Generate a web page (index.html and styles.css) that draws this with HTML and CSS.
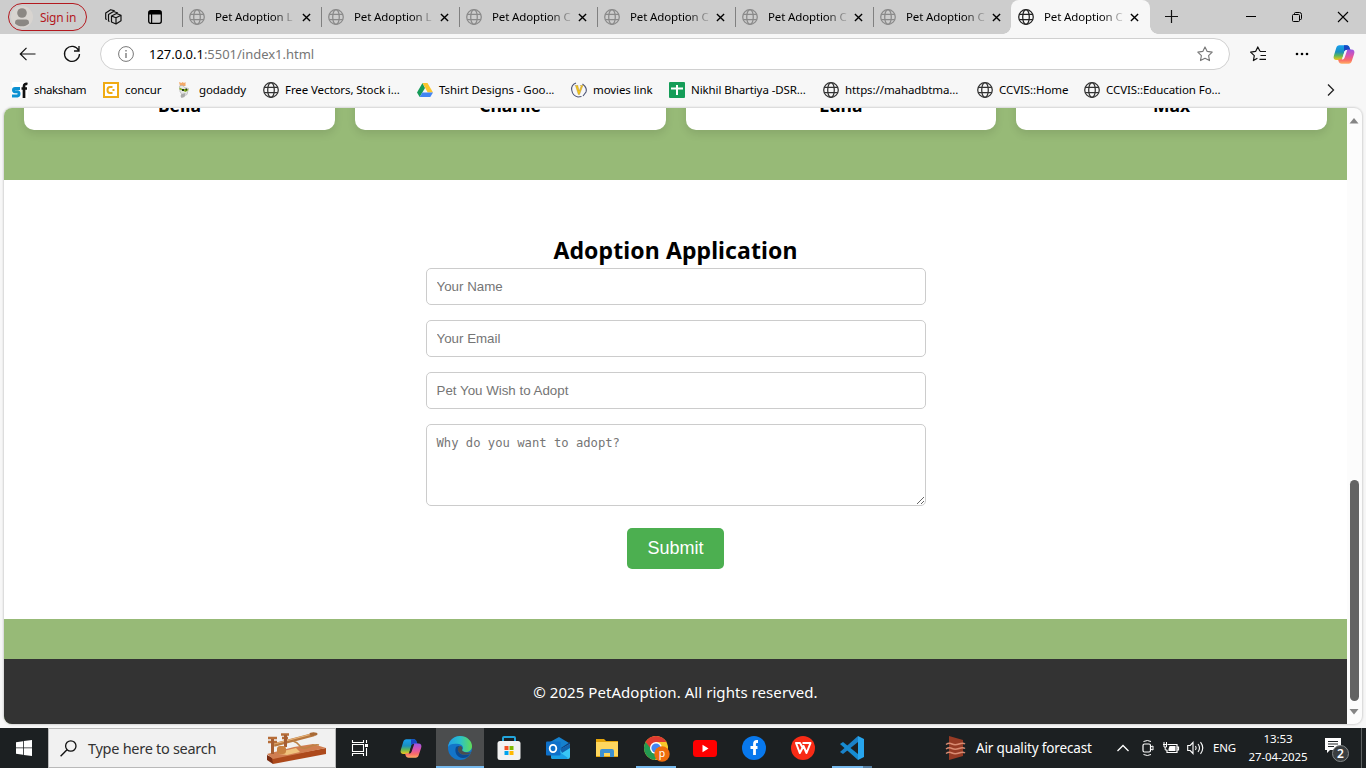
FILE: index.html
```html
<!DOCTYPE html>
<html lang="en">
<head>
<meta charset="utf-8">
<title>Pet Adoption</title>
<link rel="stylesheet" href="styles.css">
</head>
<body>
<svg class="defs" width="0" height="0" aria-hidden="true">
  <defs>
    <symbol id="globe" viewBox="0 0 16 16"><g fill="none" stroke="currentColor" stroke-width="1.25"><circle cx="8" cy="8" r="7.3"/><ellipse cx="8" cy="8" rx="3.3" ry="7.3"/><path d="M1.200 5.400h13.600M1.200 10.600h13.600"/></g></symbol>
    <symbol id="close" viewBox="0 0 10 10"><path d="M1 1l8 8M9 1l-8 8" fill="none" stroke="currentColor" stroke-width="1.500"/></symbol>
    <symbol id="copilot" viewBox="0 0 24 22">
      <path d="M7 1h8c1.800 0 2.500 1 3 2.500L19 6h-3.500c-2 0-3 1-3.500 3l-2 6.500C9.500 17 9 17 7 17H4c-3 0-4-2-3-5l2.500-8C4.200 2 5 1 7 1z" fill="url(#cpA)"/>
      <path d="M12 1h3c1.800 0 2.500 1 3 2.500L19 6h-3.500c-2 0-3 .5-3.500 1.500z" fill="#1748c4"/>
      <path d="M17 21H9.500c-2 0-3-1-3.500-3l-.5-1.500H8c2 0 3-1 3.500-3l2-6C14 6 15 5.500 17 5.500h3c3 0 4 2 3 5l-2.500 7.500c-.7 2-1.500 3-3.500 3z" fill="url(#cpB)"/>
      <path d="M10.500 14.500l2.200-7C13.300 6.300 14 6 15.500 6l-2.700 8c-.6 1.800-1.200 2.500-3.300 2.500.6-.5.700-1 1-2z" fill="var(--behind, #f7f7f7)"/>
    </symbol>
    <linearGradient id="cpA" x1="0" y1="0" x2="0" y2="1"><stop offset="0" stop-color="#18a0f0"/><stop offset=".45" stop-color="#1a8fbd"/><stop offset=".7" stop-color="#5db65a"/><stop offset="1" stop-color="#f4c818"/></linearGradient>
    <linearGradient id="cpB" x1="0" y1="0" x2="0" y2="1"><stop offset="0" stop-color="#9b55e5"/><stop offset=".45" stop-color="#df55a8"/><stop offset=".75" stop-color="#fa6d68"/><stop offset="1" stop-color="#ffac63"/></linearGradient>
  </defs>
</svg>

<header class="tabstrip">
  <div class="signin"><svg width="22" height="22" viewBox="0 0 22 22"><circle cx="11" cy="11" r="11" fill="#d8d4d0"/><circle cx="11" cy="7" r="4.800" fill="#8b8783"/><path d="M4 17.500c0-3.300 1-4 3.500-4h7c2.500 0 3.500.7 3.500 4-2 2-4.500 2.800-7 2.800s-5-.8-7-2.800z" fill="#8b8783"/></svg><span>Sign in</span></div>
  <svg class="workspaces" width="17" height="16" viewBox="0 0 17 16"><g fill="none" stroke="#111" stroke-width="1.200" stroke-linejoin="round"><path d="M6.500 7l5-2.500 4.500 1.800v5.500L11 15l-4.500-2zM6.500 7l4.500 1.800 5-2.500M11 8.800V15"/><path d="M4.500 12.500l-1-.5V5.500l5-3 4.500 1.500M1.800 10.500L.7 10V4l5-3.300 4 1.200"/></g></svg>
  <svg class="tab-menu" width="14" height="14" viewBox="0 0 14 14"><rect x=".7" y=".7" width="12.600" height="12.600" rx="2" fill="none" stroke="#000" stroke-width="1.300"/><path d="M1 1h12v3.500H1zM3 4h1.200v9H3z"/></svg>
  <nav class="tabs">
    <div class="tab first"><svg class="ico"><use href="#globe"/></svg><span class="tab-title">Pet Adoption L</span><svg class="x"><use href="#close"/></svg></div>
    <div class="tab"><svg class="ico"><use href="#globe"/></svg><span class="tab-title">Pet Adoption L</span><svg class="x"><use href="#close"/></svg></div>
    <div class="tab"><svg class="ico"><use href="#globe"/></svg><span class="tab-title">Pet Adoption C</span><svg class="x"><use href="#close"/></svg></div>
    <div class="tab"><svg class="ico"><use href="#globe"/></svg><span class="tab-title">Pet Adoption C</span><svg class="x"><use href="#close"/></svg></div>
    <div class="tab"><svg class="ico"><use href="#globe"/></svg><span class="tab-title">Pet Adoption C</span><svg class="x"><use href="#close"/></svg></div>
    <div class="tab"><svg class="ico"><use href="#globe"/></svg><span class="tab-title">Pet Adoption C</span><svg class="x"><use href="#close"/></svg></div>
    <div class="tab active"><svg class="ico"><use href="#globe"/></svg><span class="tab-title">Pet Adoption C</span><svg class="x"><use href="#close"/></svg></div>
  </nav>
  <svg class="newtab" width="14" height="14" viewBox="0 0 14 14"><path d="M6.500 0v13M0 6.500h13" stroke="#111" stroke-width="1.200"/></svg>
  <div class="winbtns">
    <svg width="10" height="10"><path d="M0 4.500h10" stroke="#000"/></svg>
    <svg width="10" height="10" viewBox="0 0 10 10"><path d="M2.500 2V1.500q0-1 1-1H7.500q2 0 2 2V6.500q0 1-1 1H8" fill="none" stroke="#000"/><rect x=".5" y="2.500" width="7" height="7" rx="1" fill="none" stroke="#000"/></svg>
    <svg width="10" height="10"><path d="M0 0l10 10M10 0L0 10" stroke="#000" stroke-width="1.100"/></svg>
  </div>
</header>

<div class="toolbar">
  <svg class="back" width="17" height="14" viewBox="0 0 17 14"><path d="M16.500 7H1.500M7.500 .8L1.300 7l6.200 6.200" fill="none" stroke="#111" stroke-width="1.200"/></svg>
  <svg class="reload" width="18" height="18" viewBox="0 0 18 18"><path d="M15.700 5.500A7.500 7.500 0 1 0 16.500 9M16 1v5h-5" fill="none" stroke="#111" stroke-width="1.300"/></svg>
  <div class="address">
    <svg width="16" height="16" viewBox="0 0 16 16"><circle cx="8" cy="8" r="7.400" fill="none" stroke="#777"/><path d="M8 7v5M8 4v1.500" stroke="#666" stroke-width="1.200"/></svg>
    <span class="url">127.0.0.1<span>:5501/index1.html</span></span>
    <svg class="star" width="16" height="16" viewBox="0 0 16 16"><path d="M8 .9l2.200 4.500 5 .7-3.600 3.500.9 5L8 12.300l-4.500 2.300.9-5L.8 6.100l5-.7z" fill="none" stroke="#777" stroke-width="1.100" stroke-linejoin="round"/></svg>
  </div>
  <svg class="favs" width="17" height="16" viewBox="0 0 17 16"><path d="M10 5.200L7.800.9 5.600 5.400l-5 .7 3.700 3.500-.9 5 4-2.300M10 5.500h6M10.500 9.500H16M9.500 13.300H16" fill="none" stroke="#111" stroke-width="1.200" stroke-linejoin="round"/></svg>
  <svg class="more" width="14" height="4"><circle cx="2" cy="2" r="1.300"/><circle cx="7" cy="2" r="1.300"/><circle cx="12" cy="2" r="1.300"/></svg>
  <svg class="cp" width="22" height="21"><use href="#copilot"/></svg>
</div>

<nav class="bookmarks">
  <a><svg class="ico" viewBox="0 0 16 16"><rect width="16" height="16" fill="#fff"/><path d="M8 6.500H3q-1.500 0-1.500 1.600T3 9.800h2.500q1.500 0 1.500 2T5.500 14H0" fill="none" stroke="#0c91d2" stroke-width="3"/><path d="M15.500 2q-3.500-.7-3.500 2.500V16M9.500 6.500H15" fill="none" stroke="#111" stroke-width="2.700"/></svg><span>shaksham</span></a>
  <a><svg class="ico" viewBox="0 0 16 16"><rect x="1" y="1" width="14" height="14" fill="#fff" stroke="#f0ab13" stroke-width="2"/><path d="M9.500 5H7Q4.500 5 4.500 8T7 11h2.500" fill="none" stroke="#f0ab13" stroke-width="2"/><path d="M9.500 7h2v2h-2z" fill="#f0ab13"/></svg><span>concur</span></a>
  <a><svg class="ico" viewBox="0 0 16 16"><path d="M2 0l2.500 1 1-1 1.500 1 1.500-1v4H3z" fill="#f4a968"/><path d="M2.500 4q4-1.500 5 1.500l4 1-1.500 6-4 2-3-5z" fill="#e6e6e6" stroke="#aaa" stroke-width=".6"/><path d="M2.500 5.500l3 1.500 5 0 1 1-3 2-3-1.500-3-1z" fill="#88b51e"/><path d="M5 7h2v2H5zM8.500 6.500h1.500v2H8.500z" fill="#263b18"/><path d="M4.500 12l4-1-1 4-3 1-1-2z" fill="#aaa"/></svg><span>godaddy</span></a>
  <a><svg class="ico"><use href="#globe"/></svg><span>Free Vectors, Stock i...</span></a>
  <a><svg class="ico" viewBox="0 0 16 16"><path d="M5.500 1L0 10.500 2.700 15 8 6z" fill="#159b58"/><path d="M5.500 1h5L16 10.500h-5.300z" fill="#fbc62c"/><path d="M5.300 10.500H16L13.300 15H2.700z" fill="#4285f4"/></svg><span>Tshirt Designs - Goo...</span></a>
  <a><svg class="ico" viewBox="0 0 16 16"><path d="M5 1Q0 3 .7 8q1 6 6.300 7l3.500-.5M11.500 2q5 4 3.500 8l-3 4" fill="none" stroke="#4b5375" stroke-width="1.100"/><path d="M4 3.500h3v1l1.200 4.500L10 4.500l-.8-1h3.300l-1 1-3 8H7.300l-2.500-8z" fill="#f3c51b" stroke="#a98732" stroke-width=".4"/></svg><span>movies link</span></a>
  <a><svg class="ico" viewBox="0 0 16 16"><rect width="16" height="16" rx="1" fill="#159d58"/><path d="M2 6.500h12M8 3v10" stroke="#fff" stroke-width="2"/></svg><span>Nikhil Bhartiya -DSR...</span></a>
  <a><svg class="ico"><use href="#globe"/></svg><span>https://mahadbtma...</span></a>
  <a><svg class="ico"><use href="#globe"/></svg><span>CCVIS::Home</span></a>
  <a><svg class="ico"><use href="#globe"/></svg><span>CCVIS::Education Fo...</span></a>
  <svg class="chev" width="8" height="12"><path d="M1 .5L6.500 6 1 11.500" fill="none" stroke="#222" stroke-width="1.300"/></svg>
</nav>

<div class="viewport">
  <main class="page">
    <section class="pets">
      <div class="card"><h3>Bella</h3></div>
      <div class="card"><h3>Charlie</h3></div>
      <div class="card"><h3>Luna</h3></div>
      <div class="card"><h3>Max</h3></div>
    </section>
    <section class="apply">
      <h2>Adoption Application</h2>
      <form>
        <input type="text" placeholder="Your Name">
        <input type="email" placeholder="Your Email">
        <input type="text" placeholder="Pet You Wish to Adopt">
        <textarea placeholder="Why do you want to adopt?"></textarea>
        <button type="button">Submit</button>
      </form>
    </section>
    <footer><span>© 2025 PetAdoption. All rights reserved.</span></footer>
  </main>
  <div class="scrollbar">
    <svg width="10" height="6"><path d="M5 0l4.500 5.500h-9z" fill="#858585"/></svg>
    <div class="thumb"></div>
    <svg width="10" height="6"><path d="M.5 0h9L5 5.500z" fill="#858585"/></svg>
  </div>
</div>

<div class="taskbar">
  <div class="start"><svg width="16" height="16" viewBox="0 0 16 16"><path d="M0 2.200l7-1v6.300H0zM7.800 1L16 0v7.500H7.800zM0 8.300h7v6.400l-7-1zM7.800 8.300H16V16l-8.200-1.100z" fill="#fff"/></svg></div>
  <div class="search">
    <svg width="17" height="17" viewBox="0 0 17 17"><circle cx="10.800" cy="6" r="5.200" fill="none" stroke="#111" stroke-width="1.300"/><path d="M7 9.800L.6 16.200" stroke="#111" stroke-width="1.400"/></svg>
    <span>Type here to search</span>
    <svg class="morse" width="61" height="32" viewBox="0 0 61 32"><path d="M1 23l6 3v6l-6-4z" fill="#7c2d12"/><path d="M6 26l54-10v6L7 32z" fill="#ad4a1c"/><path d="M1 22l27-7 19-3 13 4L7 27z" fill="#d07d50"/><path d="M13 20l17-4 4 4-13 3-8-1z" fill="#efc27d"/><path d="M8 13L48 2.500" stroke="#b8783f" stroke-width="3.400"/><path d="M8 12L48 1.500" stroke="#e8b67c" stroke-width="1.200"/><ellipse cx="47.500" cy="2" rx="4" ry="1.800" fill="#a86a36"/><path d="M2 6h9M2 10h9M15 2.500h8M16 6h6" stroke="#b66d38" stroke-width="2.400"/><path d="M6.500 7v15M19.500 3v12" stroke="#a65e32" stroke-width="3"/><rect x="11" y="14" width="9" height="8" rx="3" fill="#c88140"/><path d="M27 9q4 1 7 5t9 1 10-2" fill="none" stroke="#bd8347" stroke-width="1.400"/></svg>
  </div>
  <div class="apps">
    <div class="app wide"><svg width="17" height="16" viewBox="0 0 17 16"><path d="M.5 0v2.500h11V0M.5 16v-2.500h11V16M.5 4.500h11v7H.500zM14.500 0v3M14.500 8v8" fill="none" stroke="#fff" stroke-width="1.100"/><path d="M13 4h3v3h-3z" fill="#fff"/></svg></div>
    <div class="app dark"><svg width="22" height="21"><use href="#copilot"/></svg></div>
    <div class="app edge"><svg width="24" height="24" viewBox="0 0 24 24"><defs><linearGradient id="eg" x1="0" x2="1"><stop offset="0" stop-color="#239ee7"/><stop offset=".5" stop-color="#2ac1ca"/><stop offset="1" stop-color="#62dc55"/></linearGradient></defs><circle cx="12" cy="12" r="12" fill="#1375c8"/><path d="M0 11C1 4 6 0 12 0c7 0 12 5 12 10 0 4-3 6-6 6s-5-1-4-2c2-2 1-5-3-6C6 7 1 8 0 11z" fill="url(#eg)"/><path d="M8 11c-2 5 1 11 7 11 3 0 5-1 7-4-5 2-11 1-12-4 0-2 1-4 2-4-2 0-3 0-4 1z" fill="#0c4a91"/><path d="M12 10c-3 1-3 6 1 8 3 1.500 7 1 10-1l1-1c-2 1-9 1-10-2 1-2 0-4-2-4z" fill="#4b4d4e"/></svg><i></i></div>
    <div class="app"><svg width="24" height="24" viewBox="0 0 24 24"><path d="M6 6V2q0-1 1-1h10q1 0 1 1v4" fill="none" stroke="#22a5dc" stroke-width="2"/><rect x=".5" y="5" width="23" height="19" rx="2.500" fill="#f2f2f2"/><path d="M7.500 10h4v4h-4z" fill="#f25022"/><path d="M12.500 10h4v4h-4z" fill="#7fba00"/><path d="M7.500 15h4v4h-4z" fill="#00a4ef"/><path d="M12.500 15h4v4h-4z" fill="#ffb900"/></svg></div>
    <div class="app"><svg width="24" height="22" viewBox="0 0 24 22"><path d="M4 5l9-5 10 6v10H4z" fill="#1581cf"/><path d="M15 11l9-6v4l-8 5z" fill="#123c78"/><path d="M5 12h10l9-5v13q0 2-2 2H7q-2 0-2-2z" fill="#39c6f4"/><path d="M14 12l10-5v4l-8 5z" fill="#1262ad"/><path d="M5 16h10l7 5-1 1H7q-2 0-2-2z" fill="#1aa0e4"/><rect x="0" y="4.500" width="14.500" height="14" rx="1" fill="#0e70c9"/><ellipse cx="7" cy="11.500" rx="3.300" ry="3.700" fill="none" stroke="#fff" stroke-width="1.800"/></svg></div>
    <div class="app"><svg width="22" height="18" viewBox="0 0 22 18"><path d="M0 0h8l2 2h12v16H0z" fill="#e5a50a"/><path d="M0 3h22v14H0z" fill="#ffd75e"/><path d="M4 18v-6q0-2 2-2h10q2 0 2 2v6h-4v-4H8v4z" fill="#3d91d2"/></svg></div>
    <div class="app run chrome"><svg width="27" height="27" viewBox="0 0 27 27"><circle cx="13" cy="13" r="12" fill="#f9c829"/><path d="M2.600 7A12 12 0 0 1 23.400 7H13l-5 9z" fill="#df3b31"/><path d="M2.600 7A12 12 0 0 0 12 25l5-9-8-1z" fill="#239951"/><circle cx="13" cy="13" r="6" fill="#fff"/><circle cx="13" cy="13" r="4.600" fill="#4285f4"/><circle cx="19" cy="19" r="7.700" fill="#ed6c0c"/><text x="19" y="21.500" text-anchor="middle" fill="#fff" class="badge-letter">p</text></svg><i></i></div>
    <div class="app"><svg width="24" height="17" viewBox="0 0 24 17"><rect width="24" height="17" rx="3.500" fill="#f00"/><path d="M9.500 4.800l6 3.700-6 3.700z" fill="#fff"/></svg></div>
    <div class="app"><svg width="24" height="24" viewBox="0 0 24 24"><circle cx="12" cy="12" r="12" fill="#0878ed"/><path d="M16 5.500h-1.200q-2.300 0-2.300 2.500v11M8.500 11.500h7" fill="none" stroke="#fff" stroke-width="2.800"/></svg></div>
    <div class="app"><svg width="24" height="24" viewBox="0 0 24 24"><circle cx="12" cy="12" r="12" fill="#f82b16"/><path d="M11.500 7H19.500L15.500 17 12.500 10 8.800 17 5 7h4l2.200 4" fill="none" stroke="#fff" stroke-width="2" stroke-linejoin="round"/></svg></div>
    <div class="app run code"><svg width="24" height="24" viewBox="0 0 24 24"><path d="M18 0l6 3v18l-6 3z" fill="#27a5ed"/><path d="M18 6L3 18l-3-2L18 0z" fill="#1b82c9"/><path d="M18 18L3 6 0 8l18 16z" fill="#168bd1"/></svg><i></i></div>
  </div>
  <div class="tray">
    <svg class="air" width="20" height="24" viewBox="0 0 20 24"><path d="M3 0l14 4v16L3 24z" fill="#963b25"/><path d="M0 8.500q3-2 6-.5t7 0 6 0M0 13q3-2 6-.5t7 0 6 0M0 17.500q3-2 6-.5t7 0 6 0" fill="none" stroke="#d98b72" stroke-width="1.500"/></svg>
    <span class="air-text">Air quality forecast</span>
    <svg class="up" width="12" height="8"><path d="M.5 7L6 1.500 11.500 7" fill="none" stroke="#fff" stroke-width="1.300"/></svg>
    <svg class="cam" width="12" height="16" viewBox="0 0 12 16"><rect x="1" y="4" width="7.500" height="8" rx="1.500" fill="none" stroke="#fff" stroke-width="1.200"/><path d="M8.500 7l2.500-1v4L8.500 9M1.500 1.500q4-2 7.500 0M1.500 14.500q4 2 7.500 0" fill="none" stroke="#fff"/></svg>
    <svg class="batt" width="16" height="12" viewBox="0 0 16 12"><path d="M5 2.500h9v8H4V8M14.500 5h1v3h-1" fill="none" stroke="#fff" stroke-width="1.200"/><path d="M6.500 4H12.500v5H5.500V7z" fill="#fff"/><path d="M1 0v2M3.500 0v2M0 2.500h4.500M1 3v2h2.500V3M2.200 5v3h2" fill="none" stroke="#fff"/></svg>
    <svg class="vol" width="17" height="14" viewBox="0 0 17 14"><path d="M.7 4.500h2.500L6 1.500v11L3.200 9.500H.7zM8.500 5q1.300 2 0 4M11 3q3 4 0 8M13.500 1.200q4.500 5.800 0 11.600" fill="none" stroke="#fff" stroke-width="1.100"/></svg>
    <span class="lang">ENG</span>
    <div class="clock"><span>13:53</span><span>27-04-2025</span></div>
    <div class="notif"><svg width="24" height="26" viewBox="0 0 24 26"><path d="M0 2h16v12H5l-3 3v-3H0z" fill="#fff"/><path d="M3 5.500h10M3 8h10M3 10.500h6" stroke="#22282a" stroke-width="1.100"/><circle cx="15.500" cy="17.500" r="8" fill="#3a3e40" stroke="#85898a"/></svg><span>2</span></div>
  </div>
</div>
</body>
</html>
```
FILE: styles.css
```css
* { box-sizing: border-box; }
body { margin: 0; width: 1366px; height: 768px; overflow: hidden; background: #f7f7f7; font-family: "Noto Sans", "Open Sans", sans-serif; color: #000; display: flex; flex-direction: column; }
svg { display: block; flex: none; overflow: visible; }
.defs { position: absolute; }
span { white-space: nowrap; }
.ico { width: 16px; height: 16px; color: #333; }

/* tab strip */
.tabstrip { height: 34px; background: #cdcdcd; display: flex; align-items: center; flex: none; }
.signin { width: 79px; height: 28px; margin-left: 8px; border: 1px solid #b3191f; border-radius: 14px; display: flex; align-items: center; padding-left: 2px; color: #b3191f; font-size: 12px; gap: 7px; letter-spacing: -.3px; }
.workspaces { margin-left: 18px; }
.tab-menu { margin-left: 26px; }
.tabs { display: flex; height: 34px; margin-left: 20px; }
.tab { width: 138px; display: flex; align-items: center; position: relative; padding-left: 7px; }
.tab.first { width: 139px; }
.tab::before { content: ""; position: absolute; left: 0; top: 7px; width: 1px; height: 20px; background: #808080; }
.tab .ico { color: #8a8a8a; }
.tab-title { margin-left: 10px; width: 79px; font-size: 11.500px; letter-spacing: -.14px; line-height: 18px; -webkit-mask-image: linear-gradient(90deg, #000 58px, transparent 82px); mask-image: linear-gradient(90deg, #000 58px, transparent 82px); }
.x { width: 9px; height: 9px; margin-left: 7px; }
.tab.first .x { margin-left: 8px; }
.tab.active { width: 139px; background: #f7f7f7; border-radius: 8px 8px 0 0; }
.tab.active .ico { color: #222; }
.tab.active::before { left: -8px; top: 26px; width: 8px; height: 8px; background: radial-gradient(circle at 0 0, transparent 7.5px, #f7f7f7 8px); }
.tab.active::after { content: ""; position: absolute; right: -8px; top: 26px; width: 8px; height: 8px; background: radial-gradient(circle at 100% 0, transparent 7.5px, #f7f7f7 8px); }
.newtab { margin-left: 15px; }
.winbtns { display: flex; gap: 36px; margin-left: auto; margin-right: 18px; }

/* address bar */
.toolbar { height: 40px; flex: none; display: flex; align-items: center; padding-left: 19px; }
.reload { margin-left: 27px; }
.address { width: 1130px; height: 32px; margin-left: 19px; border: 1px solid #d0d0d0; border-radius: 16px; background: #fff; display: flex; align-items: center; padding: 0 16px 0 17px; }
.url { margin-left: 15px; font-size: 13px; letter-spacing: -.02px; }
.url span { color: #767676; }
.star { margin-left: auto; }
.favs { margin-left: 20px; }
.more { margin-left: 28px; }
.cp { margin-left: 24px; }

/* bookmarks */
.bookmarks { height: 34px; flex: none; display: grid; grid-template-columns: 91px 74px 86px 154px 154px 98px 154px 154px 107px 243px 8px; align-items: center; padding-left: 12px; padding-bottom: 2px; font-size: 11.500px; letter-spacing: -.09px; }
.bookmarks a { display: flex; align-items: center; gap: 6px; }
.bookmarks span { line-height: 16px; margin-top: -1px; }
.bookmarks a:first-child { letter-spacing: -.36px; }

/* page */
.viewport { width: 1358px; height: 616px; flex: none; margin-left: 4px; display: flex; background: #fcfcfc; border-radius: 8px; overflow: hidden; box-shadow: 0 0 2px 1px rgba(0,0,0,.14); }
.page { width: 1343px; height: 616px; background: #97ba77; overflow: hidden; display: flex; flex-direction: column; }
.pets { height: 72px; flex: none; padding: 0 20px; display: grid; grid-template-columns: repeat(4, 1fr); gap: 20px; align-items: start; }
.card { height: 122px; margin-top: -100px; background: #fff; border-radius: 10px; box-shadow: 0 4px 8px rgba(0,0,0,.1); text-align: center; display: flex; flex-direction: column; justify-content: flex-end; padding-bottom: 12px; }
.card h3 { margin: 0; font-size: 17.500px; line-height: 25px; letter-spacing: 0; }
.apply { height: 439px; flex: none; background: #fff; text-align: center; padding-top: 53px; }
.apply h2 { margin: 0 0 1px; font-size: 23px; line-height: 34px; letter-spacing: .1px; }
form { width: 500px; margin: 0 auto; display: flex; flex-direction: column; align-items: center; }
input, textarea { width: 500px; border: 1px solid #ccc; border-radius: 5px; padding: 10px; margin: 0 0 15px; font: 13.333px "Liberation Sans", Arial, sans-serif; background: #fff; }
input { height: 37px; }
textarea { height: 82px; font: 12.200px/16px "DejaVu Sans Mono", monospace; margin-bottom: 22px; }
input::placeholder, textarea::placeholder { color: #757575; opacity: 1; }
button { width: 97px; height: 41px; border: 0; border-radius: 5px; background: #4caf50; color: #fff; font: 18px "Liberation Sans", Arial, sans-serif; padding: 0; }
footer { margin-top: 40px; height: 65px; background: #333; color: #fff; display: flex; align-items: center; justify-content: center; font-size: 15px; letter-spacing: .06px; }
.scrollbar { width: 15px; display: flex; flex-direction: column; align-items: center; padding: 10px 1px 9px 0; }
.thumb { width: 9px; height: 221px; margin-top: auto; margin-bottom: 8px; border-radius: 5px; background: #636363; }

/* taskbar */
.taskbar { margin-top: 4px; height: 40px; flex: none; background: #1c2022; color: #fff; display: flex; }
.start { width: 48px; display: grid; place-items: center; }
.search { width: 288px; background: #f1f1f1; border: 1px solid #b9b9b9; display: flex; align-items: center; padding-left: 11px; color: #333; font-size: 14.500px; }
.search span { margin-left: 11px; letter-spacing: -.28px; }
.morse { margin-left: auto; margin-right: 8px; }
.apps { display: flex; }
.app { width: 49px; display: grid; place-items: center; position: relative; }
.app.wide { width: 50px; padding-right: 2px; }
.app.dark { --behind: #1c2022; }
.app.edge { width: 48px; margin-left: 1px; background: #4b4d4e; }
.app i { position: absolute; left: 0; right: 0; bottom: 0; height: 2px; background: #76b9ed; }
.app.run i { left: 5px; right: 4px; }
.app.chrome svg { margin-left: 2px; }
.app.code i { background: linear-gradient(90deg, #76b9ed 31px, #547da0 31px); }
.badge-letter { font: 10.500px "Noto Sans", sans-serif; }
.tray { margin-left: auto; display: flex; align-items: center; height: 40px; }
.air-text { margin-left: 10px; font-size: 13.500px; letter-spacing: -.15px; width: 116px; }
.up { margin-left: 25px; }
.cam { margin-left: 13px; }
.batt { margin-left: 9px; }
.vol { margin-left: 8px; }
.lang { margin-left: 9px; width: 23px; font-size: 11.500px; line-height: 16px; letter-spacing: -.2px; margin-top: -1px; }
.clock { margin-left: 12px; width: 60px; display: flex; flex-direction: column; align-items: center; font-size: 11.500px; line-height: 18px; letter-spacing: -.1px; margin-top: -1px; }
.notif { position: relative; margin-left: 17px; margin-right: 17px; margin-top: 2px; }
.notif span { position: absolute; left: 12px; top: 8px; font-size: 12px; line-height: 19px; font-weight: 600; }
.tray::after { content: ""; width: 1px; height: 40px; background: #5d6162; margin-right: 4px; margin-left: -5px; }
```
